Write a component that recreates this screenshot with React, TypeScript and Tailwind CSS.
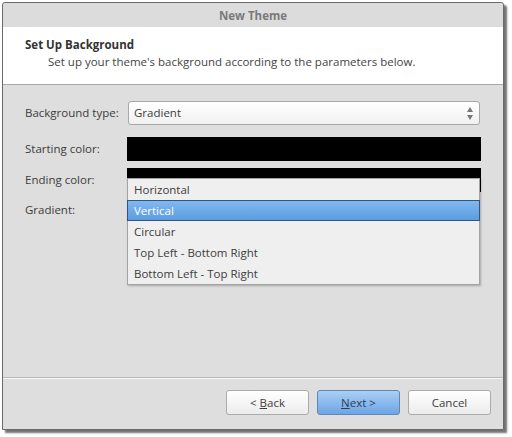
import React from 'react';

const items = ['Horizontal', 'Vertical', 'Circular', 'Top Left - Bottom Right', 'Bottom Left - Top Right'];

function Button({ children, primary }: { children: React.ReactNode; primary?: boolean }) {
  return (
    <button
      className={
        primary
          ? 'w-[83px] h-[25px] rounded-[3px] border border-[#5c87b6] bg-gradient-to-b from-[#a9cff4] to-[#6ea5e4] text-[#2c3e55]'
          : 'w-[83px] h-[25px] rounded-[3px] border border-[#ababab] bg-gradient-to-b from-white to-[#ececec] text-[#3d3d3d]'
      }
    >
      {children}
    </button>
  );
}

export default function App() {
  return (
    <div className="w-[512px] h-[437px] bg-white pt-[2px] pl-[2px] text-[11.5px] text-[#3c3c3c] font-['Open_Sans','Noto_Sans',sans-serif]">
      <div className="relative w-[502px] h-[428px] flex flex-col border border-[#6a6a6a] rounded-t-[3px] shadow-[3px_3px_2px_rgba(0,0,0,0.55)] bg-[#dedede]">
        {/* title bar */}
        <div className="h-[24px] bg-[#dcdcdc] rounded-t-[3px] flex items-center justify-center pt-[2px] font-bold text-[#7a7a7a]">
          New Theme
        </div>

        {/* header */}
        <div className="h-[58px] bg-white border-b border-[#aaaaaa] pl-[22px] pt-[9px]">
          <div className="font-bold text-[#333] leading-[17px]">Set Up Background</div>
          <div className="pl-[23px] leading-[17px] text-[#444]">
            Set up your theme's background according to the parameters below.
          </div>
        </div>

        {/* body */}
        <div className="flex-1 border-b border-[#b8b8b8] shadow-[0_1px_0_#f6f6f6] pl-[22px] pr-[23px] pt-[16px]">
          <div className="flex items-center h-[24px]">
            <div className="w-[103px]">Background type:</div>
            <div className="flex-1 h-[24px] rounded-[3px] border border-[#a8a8a8] bg-gradient-to-b from-white to-[#f1f1f1] flex items-center pl-[5px] pr-[6px]">
              <span className="flex-1">Gradient</span>
              <span className="flex flex-col items-center gap-[3px]">
                <span className="w-0 h-0 border-l-[3px] border-r-[3px] border-b-[5px] border-l-transparent border-r-transparent border-b-[#777]" />
                <span className="w-0 h-0 border-l-[3px] border-r-[3px] border-t-[5px] border-l-transparent border-r-transparent border-t-[#777]" />
              </span>
            </div>
          </div>
          <div className="flex items-center h-[24px] mt-[12px]">
            <div className="w-[102px]">Starting color:</div>
            <div className="flex-1 h-[24px] bg-black -mr-[1px]" />
          </div>
          <div className="flex items-center h-[24px] mt-[7px]">
            <div className="w-[102px]">Ending color:</div>
            <div className="flex-1 h-[24px] bg-black -mr-[1px]" />
          </div>
          <div className="flex items-center h-[24px] mt-[6px]">
            <div className="w-[102px]">Gradient:</div>
            <div className="flex-1 h-[24px]" />
          </div>
        </div>

        {/* footer */}
        <div className="h-[51px] flex items-center justify-end gap-[8px] pr-[12px] pb-[2px]">
          <Button>
            &lt; <span className="underline">B</span>ack
          </Button>
          <Button primary>
            <span className="underline">N</span>ext &gt;
          </Button>
          <Button>Cancel</Button>
        </div>

        {/* popup list of the gradient combobox */}
        <div className="absolute left-[124px] top-[175px] w-[353px] h-[107px] bg-[#efefef] border border-[#a3a3a3] shadow-[1px_1px_2px_rgba(0,0,0,0.25)]">
          {items.map((item) => (
            <div
              key={item}
              className={
                item === 'Vertical'
                  ? 'h-[21px] flex items-center pl-[6px] border border-[#34557d] bg-gradient-to-b from-[#80b8f0] to-[#5c9ce0] text-white -mx-[1px]'
                  : 'h-[21px] flex items-center pl-[6px] text-[#3c3c3c]'
              }
            >
              {item}
            </div>
          ))}
        </div>
      </div>
    </div>
  );
}
